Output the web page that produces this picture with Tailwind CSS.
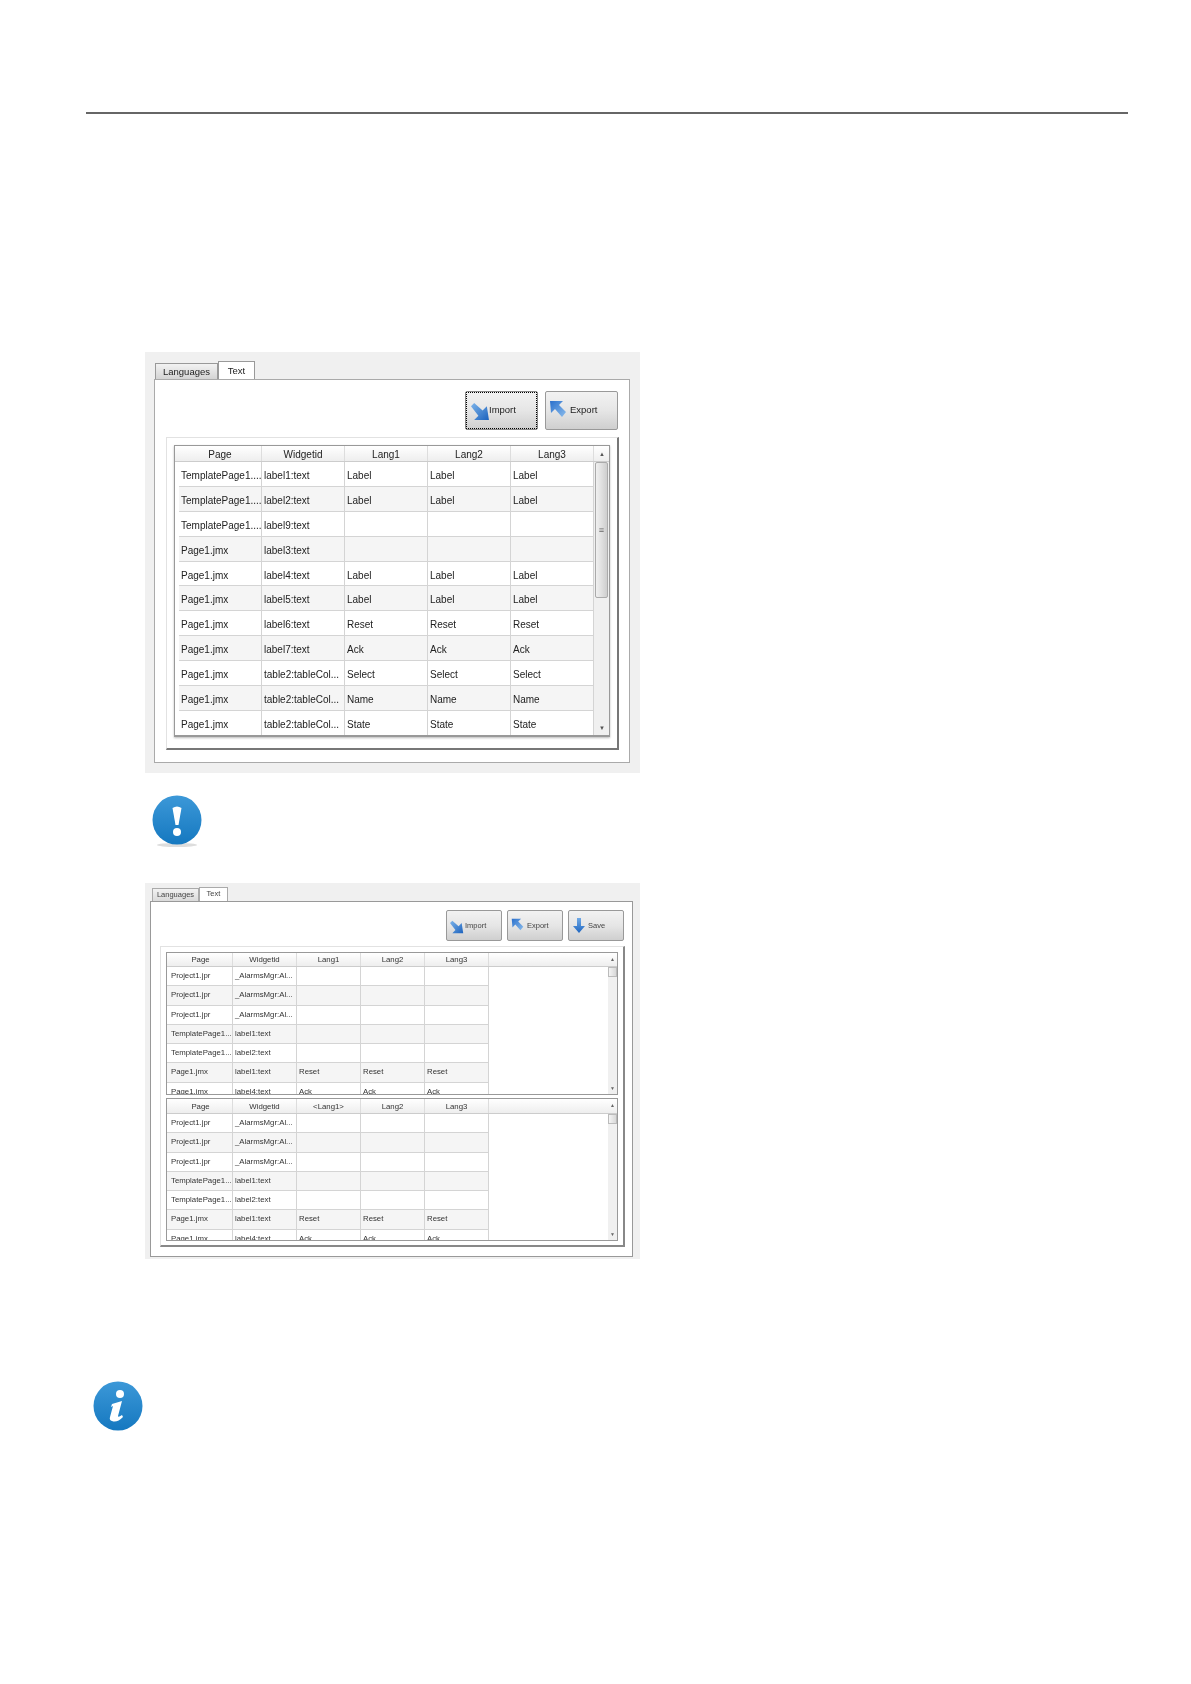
<!DOCTYPE html>
<html lang="en">
<head>
    <meta charset="UTF-8" />
    <title>Text translations</title>
    <script src="https://cdn.jsdelivr.net/npm/@tailwindcss/browser@4"></script>
</head>
<body class="bg-white text-[#222] font-['Liberation_Sans',sans-serif]">
    <div class="w-[1191px] h-[1684px] overflow-hidden">
        <div class="h-[112px]"></div>
        <div class="ml-[86px] w-[1042px] h-[2px] bg-[#666]"></div>

        <!-- Shared arrow gradients -->
        <svg class="w-0 h-0 absolute">
            <defs>
                <linearGradient id="arrow-down" x1="0" y1="0" x2="1" y2="1"><stop offset="0" stop-color="#7db4ea"/><stop offset="1" stop-color="#1c62bd"/></linearGradient>
                <linearGradient id="arrow-up" x1="0" y1="0" x2="1" y2="1"><stop offset="0" stop-color="#2a70cc"/><stop offset="1" stop-color="#8bbcec"/></linearGradient>
                <linearGradient id="arrow-save" x1="0" y1="0" x2="0" y2="1"><stop offset="0" stop-color="#6fa9e6"/><stop offset="1" stop-color="#1f66c0"/></linearGradient>
            </defs>
        </svg>

        <!-- First screenshot -->
        <div class="mt-[238px] ml-[145px] w-[495px] h-[421px] bg-[#f0f0f0] pt-[9px] pl-[9px] blur-[0.35px]">
            <div class="flex items-end h-[18px] pl-[1px] text-[9.5px]">
                <div class="w-[63px] h-[16px] bg-gradient-to-b from-[#f2f2f2] to-[#d4d4d4] border border-b-0 border-[#999] text-center leading-[16px]">Languages</div>
                <div class="w-[37px] h-[18px] bg-white border border-b-0 border-[#999] text-center leading-[17px]">Text</div>
            </div>
            <div class="w-[476px] h-[384px] bg-white border border-[#aaa] pt-[11px] pl-[11px]">
                <div class="flex justify-end gap-[7px] pr-[11px] text-[9.5px]">
                    <div class="relative flex items-center pl-[5px] w-[73px] h-[39px] rounded-[2px] bg-gradient-to-b from-[#f2f2f2] via-[#e6e6e6] to-[#cfcfcf] border border-[#888]">
                        <div class="absolute inset-0 border border-dotted border-black"></div>
                        <svg class="w-[19px] h-[19px] mt-[2px]" viewBox="0 0 18 18"><path d="M0 4l3-3 8 7 4-4 2 13H3l4-4z" fill="url(#arrow-down)"/></svg>
                        <span class="-ml-[1px] -mt-[1px]">Import</span>
                    </div>
                    <div class="flex items-center gap-[3px] pl-[3px] w-[73px] h-[39px] rounded-[2px] bg-gradient-to-b from-[#f2f2f2] via-[#e6e6e6] to-[#cfcfcf] border border-[#999]">
                        <svg class="w-[18px] h-[18px] -mt-[3px]" viewBox="0 0 18 18"><path d="M1 1h13l-4 4 7 7-4 5-7-8-4 4z" fill="url(#arrow-up)"/></svg>
                        <span class="-mt-[1px]">Export</span>
                    </div>
                </div>
                <div class="mt-[7px] w-[453px] h-[313px] border border-[#e2e2e2] border-r-2 border-b-2 border-r-[#777] border-b-[#777] pt-[7px] pl-[7px]">
                    <div id="table-big"></div>
                </div>
            </div>
        </div>

        <!-- Exclamation note -->
        <div class="mt-[22px] ml-[152px] w-[50px] h-[52px] blur-[0.6px]">
            <svg class="w-[50px] h-[52px]" viewBox="0 0 50 52">
                <defs><linearGradient id="g1" x1="0" y1="0" x2="0" y2="1"><stop offset="0" stop-color="#3c98d8"/><stop offset="1" stop-color="#1578c0"/></linearGradient></defs>
                <ellipse cx="25" cy="50" rx="20" ry="2" fill="#ddd"/>
                <circle cx="25" cy="25" r="24.5" fill="url(#g1)"/>
                <path d="M20.500 13q4.500-3 9 0l-3 17h-3z" fill="#fff"/>
                <circle cx="25" cy="37" r="4" fill="#fff"/>
            </svg>
        </div>

        <!-- Second screenshot -->
        <div class="mt-[36px] ml-[145px] w-[495px] h-[376px] bg-[#f0f0f0] pt-[4px] pl-[5px] blur-[0.35px]">
            <div class="flex items-end h-[14px] pl-[2px] text-[7.5px] text-[#444]">
                <div class="w-[47px] h-[13px] bg-gradient-to-b from-[#f2f2f2] to-[#dadada] border border-b-0 border-[#aaa] text-center leading-[12px]">Languages</div>
                <div class="w-[29px] h-[14px] bg-white border border-b-0 border-[#aaa] text-center leading-[11px]">Text</div>
            </div>
            <div class="w-[483px] h-[356px] bg-white border border-[#999] pt-[8px] pl-[9px]">
                <div class="flex justify-end gap-[5px] pr-[8px] text-[7.5px] text-[#444]">
                    <div class="flex items-center gap-[1px] pl-[3px] w-[56px] h-[31px] rounded-[2px] bg-gradient-to-b from-[#f2f2f2] via-[#e6e6e6] to-[#cfcfcf] border border-[#999]">
                        <svg class="w-[14px] h-[14px] mt-[2px]" viewBox="0 0 18 18"><path d="M0 4l3-3 8 7 4-4 2 13H3l4-4z" fill="url(#arrow-down)"/></svg>
                        <span>Import</span>
                    </div>
                    <div class="flex items-center gap-[3px] pl-[3px] w-[56px] h-[31px] rounded-[2px] bg-gradient-to-b from-[#f2f2f2] via-[#e6e6e6] to-[#cfcfcf] border border-[#999]">
                        <svg class="w-[13px] h-[13px] -mt-[2px]" viewBox="0 0 18 18"><path d="M1 1h13l-4 4 7 7-4 5-7-8-4 4z" fill="url(#arrow-up)"/></svg>
                        <span>Export</span>
                    </div>
                    <div class="flex items-center gap-[3px] pl-[4px] w-[56px] h-[31px] rounded-[2px] bg-gradient-to-b from-[#f2f2f2] via-[#e6e6e6] to-[#cfcfcf] border border-[#999]">
                        <svg class="w-[12px] h-[15px]" viewBox="0 0 12 15"><path d="M4 0h4v8h4l-6 7-6-7h4z" fill="url(#arrow-save)"/></svg>
                        <span>Save</span>
                    </div>
                </div>
                <div class="mt-[5px] w-[465px] h-[301px] border border-[#e2e2e2] border-r-2 border-b-2 border-r-[#888] border-b-[#888] pt-[5px] pl-[5px]">
                    <div id="table-top"></div>
                    <div id="table-bottom" class="mt-[3px]"></div>
                </div>
            </div>
        </div>

        <!-- Info note -->
        <div class="mt-[122px] ml-[93px] w-[50px] h-[50px] blur-[0.6px]">
            <svg class="w-[50px] h-[50px]" viewBox="0 0 50 50">
                <defs><linearGradient id="g2" x1="0" y1="0" x2="0" y2="1"><stop offset="0" stop-color="#3c98d8"/><stop offset="1" stop-color="#1578c0"/></linearGradient></defs>
                <circle cx="25" cy="25" r="24.5" fill="url(#g2)"/>
                <circle cx="27" cy="13" r="4" fill="#fff"/>
                <path d="M19 23l10-3-4 15q0 2 4-1l1 2q-6 6-11 4-3-1-2-4l3-11-2 1z" fill="#fff"/>
            </svg>
        </div>
    </div>

    <script>
        const bigRows = [
            ['TemplatePage1....', 'label1:text', 'Label', 'Label', 'Label'],
            ['TemplatePage1....', 'label2:text', 'Label', 'Label', 'Label'],
            ['TemplatePage1....', 'label9:text', '', '', ''],
            ['Page1.jmx', 'label3:text', '', '', ''],
            ['Page1.jmx', 'label4:text', 'Label', 'Label', 'Label'],
            ['Page1.jmx', 'label5:text', 'Label', 'Label', 'Label'],
            ['Page1.jmx', 'label6:text', 'Reset', 'Reset', 'Reset'],
            ['Page1.jmx', 'label7:text', 'Ack', 'Ack', 'Ack'],
            ['Page1.jmx', 'table2:tableCol...', 'Select', 'Select', 'Select'],
            ['Page1.jmx', 'table2:tableCol...', 'Name', 'Name', 'Name'],
            ['Page1.jmx', 'table2:tableCol...', 'State', 'State', 'State'],
        ];
        const smallRows = [
            ['Project1.jpr', '_AlarmsMgr:Al...', '', '', ''],
            ['Project1.jpr', '_AlarmsMgr:Al...', '', '', ''],
            ['Project1.jpr', '_AlarmsMgr:Al...', '', '', ''],
            ['TemplatePage1...', 'label1:text', '', '', ''],
            ['TemplatePage1...', 'label2:text', '', '', ''],
            ['Page1.jmx', 'label1:text', 'Reset', 'Reset', 'Reset'],
            ['Page1.jmx', 'label4:text', 'Ack', 'Ack', 'Ack'],
        ];

        // Big table: 5 columns fill the width up to the scrollbar
        function renderBig(el, heads, rows) {
            const headCells = heads.map(h => `<div class="w-[83px] shrink-0 h-full border-r border-[#ddd] text-center leading-[18px]">${h}</div>`).join('');
            const body = rows.map((r, i) => `
                <div class="flex h-[24.9px] shrink-0 border-b border-[#d4d4d4] ${i % 2 ? 'bg-[#f5f5f5]' : 'bg-white'}">
                    ${r.map(c => `<div class="w-[83px] shrink-0 border-r border-[#d4d4d4] whitespace-nowrap overflow-hidden pt-[3px] leading-[21px] pl-[2px]">${c}</div>`).join('')}
                </div>`).join('');
            el.innerHTML = `
                <div class="relative w-[436px] h-[292px] overflow-hidden border border-[#999] border-b-2 text-[10px] shadow-[0_1px_2px_#bbb]">
                    <div class="flex h-[16px] pl-[4px] bg-gradient-to-b from-white to-[#eee] border-b border-[#ccc]">${headCells}</div>
                    <div class="flex">
                        <div class="w-[419px] pl-[4px] flex flex-col">${body}</div>
                        <div class="flex-1 bg-[#f0f0f0] flex flex-col items-center">
                            <div class="w-[13px] h-[136px] shrink-0 flex items-center justify-center border border-[#aaa] rounded-[2px] bg-gradient-to-r from-[#f0f0f0] via-[#e0e0e0] to-[#cecece] text-[9px] text-[#666] leading-none">≡</div>
                        </div>
                    </div>
                    <div class="absolute right-[4px] top-[5px] text-[6px] leading-none text-[#555]">▲</div>
                    <div class="absolute right-[4px] bottom-[4px] text-[6px] leading-none text-[#555]">▼</div>
                </div>`;
        }

        // Small tables: 5 columns then an empty area
        function renderSmall(el, heads, rows, height, headHeight, textClass) {
            const headCells = heads.map(h => `<div class="w-[64px] shrink-0 h-full border-r border-[#ddd] text-center">${h}</div>`).join('');
            const body = rows.map((r, i) => `
                <div class="flex h-[19.3px] shrink-0 border-b border-[#d4d4d4] w-[322px] pl-[2px] ${i % 2 ? 'bg-[#f5f5f5]' : 'bg-white'}">
                    ${r.map(c => `<div class="w-[64px] shrink-0 border-r border-[#d4d4d4] whitespace-nowrap overflow-hidden pl-[2px] leading-[18px]">${c}</div>`).join('')}
                </div>`).join('');
            el.innerHTML = `
                <div class="relative w-[452px] overflow-hidden border border-[#999] text-[7.8px] ${textClass}" style="height:${height}px">
                    <div class="flex pl-[2px] bg-gradient-to-b from-white to-[#eee] border-b border-[#ccc]" style="height:${headHeight}px;line-height:${headHeight}px">${headCells}</div>
                    <div class="flex">
                        <div class="w-[441px] flex flex-col">${body}</div>
                        <div class="flex-1 bg-[#f0f0f0] flex flex-col items-center">
                            <div class="w-[9px] h-[10px] shrink-0 border border-[#bbb] bg-gradient-to-r from-[#f4f4f4] to-[#d8d8d8]"></div>
                        </div>
                    </div>
                    <div class="absolute right-[2px] top-[4px] text-[5px] leading-none text-[#666]">▲</div>
                    <div class="absolute right-[2px] bottom-[3px] text-[5px] leading-none text-[#666]">▼</div>
                </div>`;
        }

        renderBig(document.getElementById('table-big'), ['Page', 'Widgetid', 'Lang1', 'Lang2', 'Lang3'], bigRows);
        renderSmall(document.getElementById('table-top'), ['Page', 'Widgetid', 'Lang1', 'Lang2', 'Lang3'], smallRows, 143, 14, 'text-[#333]');
        renderSmall(document.getElementById('table-bottom'), ['Page', 'Widgetid', '&lt;Lang1&gt;', 'Lang2', 'Lang3'], smallRows, 143, 15, 'text-[#333]');
    </script>
</body>
</html>
